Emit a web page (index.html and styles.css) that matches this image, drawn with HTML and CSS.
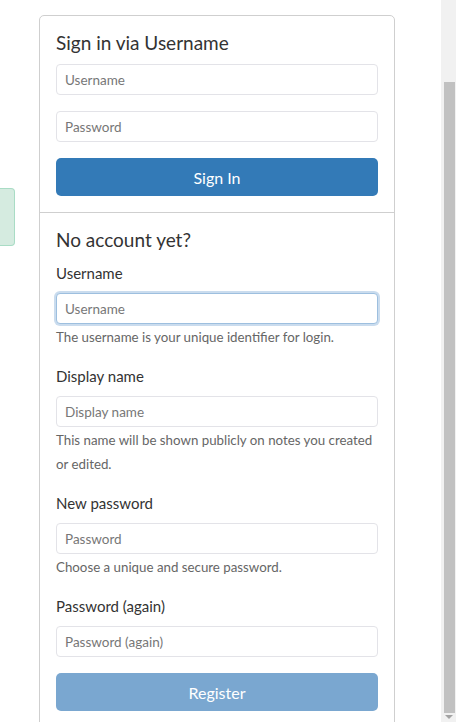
FILE: index.html
```html
<!DOCTYPE html>
<html lang="en">
<head>
<meta charset="utf-8">
<title>Sign in</title>
<link rel="stylesheet" href="styles.css">
</head>
<body>
<div class="viewport">
  <main class="stage">
    <div class="alert-stub"></div>
    <div class="card">
      <section class="card-body">
        <h2 class="card-title">Sign in via Username</h2>
        <input class="field" type="text" placeholder="Username">
        <input class="field gap" type="password" placeholder="Password">
        <button class="btn btn-primary" type="button">Sign In</button>
      </section>
      <section class="card-body divider">
        <h2 class="card-title">No account yet?</h2>
        <div class="group">
          <label class="label">Username</label>
          <input class="field focused" type="text" placeholder="Username">
          <p class="help">The username is your unique identifier for login.</p>
        </div>
        <div class="group">
          <label class="label">Display name</label>
          <input class="field" type="text" placeholder="Display name">
          <p class="help">This name will be shown publicly on notes you created or edited.</p>
        </div>
        <div class="group">
          <label class="label">New password</label>
          <input class="field" type="password" placeholder="Password">
          <p class="help">Choose a unique and secure password.</p>
        </div>
        <div class="group last">
          <label class="label">Password (again)</label>
          <input class="field" type="password" placeholder="Password (again)">
        </div>
        <button class="btn btn-primary disabled" type="button">Register</button>
      </section>
    </div>
  </main>
  <div class="scrollbar">
    <div class="track-top"></div>
    <div class="thumb"></div>
    <div class="arrow-down"></div>
  </div>
</div>
</body>
</html>
```
FILE: styles.css
```css
* { box-sizing: border-box; }
html, body { margin: 0; padding: 0; height: 100%; overflow: hidden; background: #fff; }
body { font-family: Lato, "Liberation Sans", sans-serif; color: #333; }

.viewport { display: flex; height: 722px; }
.stage {
  flex: 1;
  display: grid;
  grid-template-columns: 15px 24px 356px;
  align-items: start;
}
.alert-stub {
  margin-top: 188px;
  height: 58px;
  background: #d5ebe0;
  border: 1px solid #a9dcc5;
  border-left: none;
  border-radius: 0 4px 4px 0;
}
.card {
  grid-column: 3;
  margin-top: 15px;
  border: 1px solid #cfcfcf;
  border-radius: 5px;
  background: #fff;
  height: 740px;
}
.card-body { padding: 16px; display: flex; flex-direction: column; }
.divider { border-top: 1px solid #cfcfcf; }
.card-title {
  margin: 0 0 10px;
  font-size: 19px;
  font-weight: 400;
  line-height: 22px;
  color: #333;
}
.field {
  display: block;
  width: 100%;
  height: 31px;
  padding: 0 8px;
  font-family: inherit;
  font-size: 13.5px;
  color: #555;
  background: #fff;
  border: 1px solid #e3e3e8;
  border-radius: 4px;
  outline: none;
}
.field::placeholder { color: #777; }
.field.gap { margin-top: 16px; }
.field.focused {
  border-color: #9dbfdf;
  box-shadow: 0 0 0 2px #cadcee;
}
.btn {
  margin-top: 16px;
  height: 38px;
  border: none;
  border-radius: 5px;
  font-family: inherit;
  font-size: 16px;
  color: #fff;
  background: #337ab7;
}
.btn.disabled { background: #7aa7d0; }
.group { display: flex; flex-direction: column; margin-bottom: 15px; }
.group.last { margin-bottom: 0; }
.label {
  font-size: 15px;
  line-height: 24px;
  margin-bottom: 8px;
  color: #333;
}
.help {
  margin: 1px 0 0;
  font-size: 13.3px;
  line-height: 24px;
  color: #666;
}

.scrollbar {
  width: 15px;
  height: 722px;
  background: #f1f1f1;
  display: flex;
  flex-direction: column;
  align-items: center;
}
.track-top { height: 82px; flex: none; }
.thumb { width: 11px; height: 631px; background: #c1c1c1; margin-left: 1px; }
.arrow-down {
  margin-top: 2px;
  width: 0; height: 0;
  border-left: 4px solid transparent;
  border-right: 4px solid transparent;
  border-top: 4px solid #a3a3a3;
}
```
